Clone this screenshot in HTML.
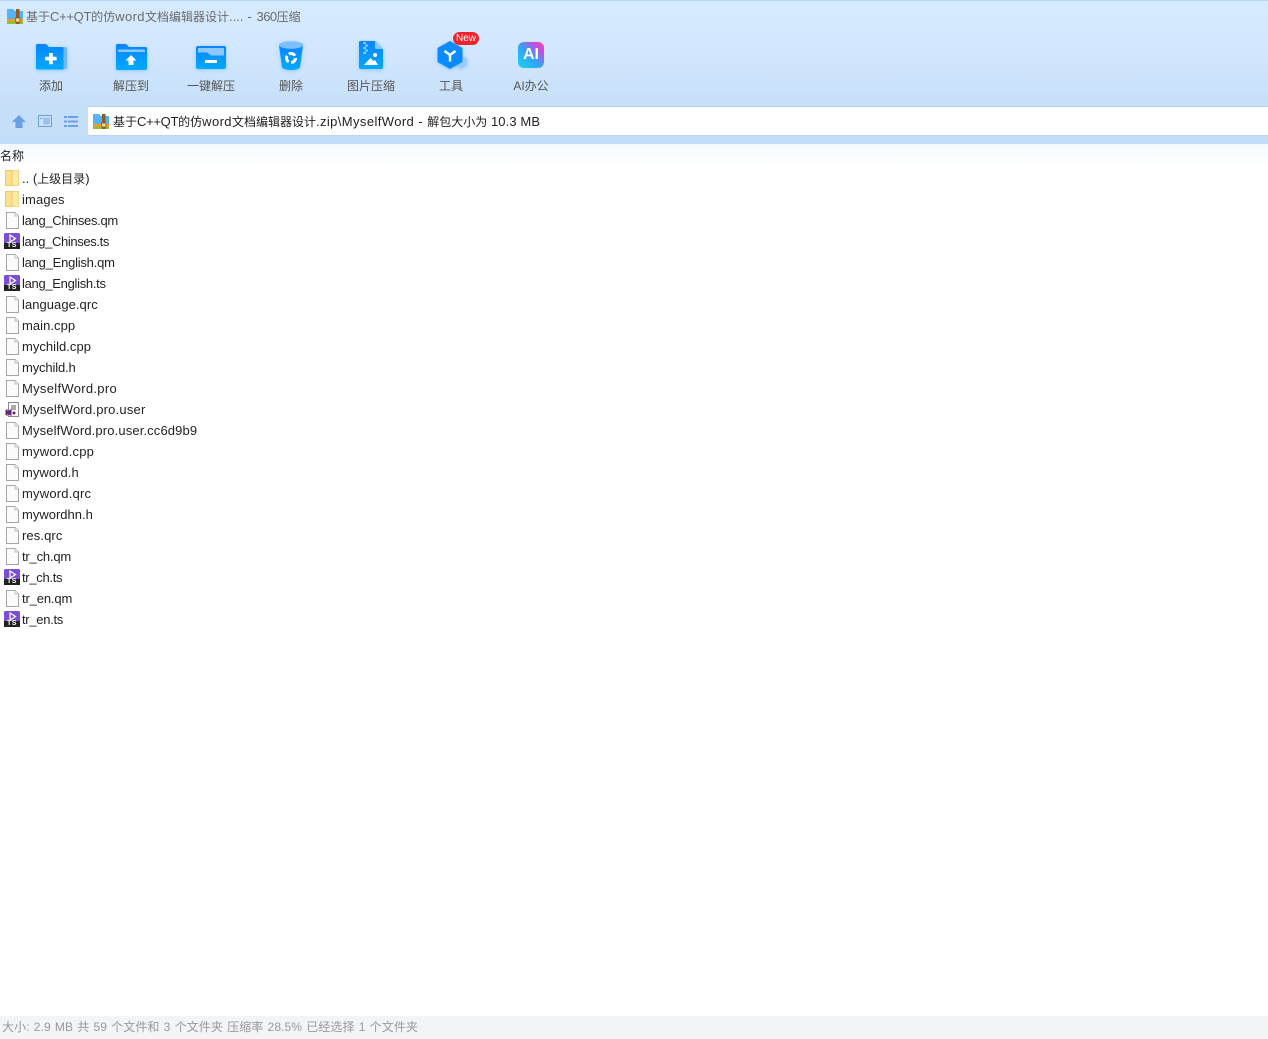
<!DOCTYPE html>
<html lang="zh-CN">
<head>
<meta charset="utf-8">
<title>360压缩</title>
<style>
html,body{margin:0;padding:0;background:#fff}
body{width:1268px;height:1039px;position:relative;overflow:hidden;font-family:"Liberation Sans","Noto Sans CJK SC",sans-serif;font-size:13px;color:#222}
.abs,.t,.l,svg{position:absolute}
.ic{filter:drop-shadow(0 1px 2px rgba(0,140,255,.3))}
#top{position:absolute;left:0;top:0;width:1268px;height:144px;background:linear-gradient(#d6ebff 0,#d2e7fe 50px,#c6dff8 106px);border-top:1px solid #b9d6f2;box-sizing:border-box}
#strip{position:absolute;left:0;top:136px;width:1268px;height:8px;background:#c2ddf9}
#fade{position:absolute;left:0;top:144px;width:1268px;height:24px;background:linear-gradient(#f3f9ff,#fff)}
#addr{position:absolute;left:88px;top:106px;width:1180px;height:28px;background:#fff;border-top:1px solid #b9d5f0;border-bottom:1px solid #b9d5f0}
.t{white-space:nowrap;line-height:18px}
.c{font-size:12px;letter-spacing:0}
.k{letter-spacing:-.3px}
.w{letter-spacing:.4px}
.d{letter-spacing:.5px}
.l{white-space:nowrap;line-height:18px;color:#555;width:80px;text-align:center;top:77px;font-size:12px}
#st{position:absolute;left:0;top:1016px;width:1268px;height:23px;background:#f3f4f8}
.ts{position:absolute;left:4px;width:16px;text-align:center;color:#fff;font-size:7px;line-height:6px;font-weight:bold;letter-spacing:.5px}
</style>
</head>
<body>
<div id="top"></div>
<div id="strip"></div>
<div id="fade"></div>
<div id="addr"></div>
<div id="st"></div>

<svg style="left:7px;top:9px" width="16" height="15" viewBox="0 0 16 15"><path d="M0 0H6L8 2H16V11H0Z" fill="#52b4f2"/><rect y="10" width="16" height="2.5" fill="#f59a23"/><rect y="12.5" width="16" height="2.5" fill="#8ac234"/><rect x="9" y="0" width="3.5" height="15" fill="#8f5a25"/><rect x="8.5" y="9" width="4.5" height="4" fill="#f7d58b" stroke="#8f5a25" stroke-width=".8"/></svg>
<div class="t" style="left:26px;top:8px;color:#6a6a6a"><span class="c">基于</span><span class="k">C++QT</span><span class="c">的仿</span><span class="w">word</span><span class="c">文档编辑器设计</span>....<span class="d"> - </span><span style="letter-spacing:-.5px">360</span><span class="c">压缩</span></div>

<svg class="ic" width="32" height="26" viewBox="0 0 32 26" style="left:35px;top:44px"><defs><linearGradient id="g" x1="0" y1="0" x2="0" y2="1"><stop offset="0" stop-color="#0a84ff"/><stop offset="1" stop-color="#00aaff"/></linearGradient></defs><path d="M27 3h3.500a1.500 1.500 0 0 1 1.500 1.500v19a1.500 1.500 0 0 1-1.500 1.500H27Z" fill="#6fb9fb"/><path d="M1 1.500C1 .7 1.700 0 2.500 0H11l3 3h13c.8 0 1.500.7 1.500 1.500V25.500H2.500C1.700 25.500 1 24.800 1 24Z" fill="url(#g)"/><path d="M14 9h3.800v3.800h3.800v3.600h-3.800v3.800H14v-3.800h-3.800v-3.600H14Z" fill="#fff"/></svg>
<div class="l" style="left:11px">添加</div>

<svg class="ic" width="31" height="26" viewBox="0 0 31 26" style="left:116px;top:44px"><path d="M0 1.500C0 .7.700 0 1.500 0H10l3 3h16.500c.8 0 1.500.7 1.500 1.500V24.500c0 .8-.7 1.500-1.500 1.500H1.500C.7 26 0 25.300 0 24.500Z" fill="url(#g)"/><path d="M2 8V6.500c0-.5.400-1 1-1H28c.6 0 1 .5 1 1V8Z" fill="#8cc8fd"/><path d="M15 11l5.500 5.500H17.500V21h-5V16.500H9.500Z" fill="#fff"/></svg>
<div class="l" style="left:91px">解压到</div>

<svg class="ic" width="30" height="23" viewBox="0 0 30 23" style="left:196px;top:46px"><rect width="30" height="23" rx="2" fill="url(#g)"/><path d="M2 2H28V9.500H15L11 6.500H2Z" fill="#8cc8fd"/><rect x="9" y="14" width="12" height="3" fill="#fff"/></svg>
<div class="l" style="left:171px">一键解压</div>

<svg class="ic" width="24" height="29" viewBox="0 0 24 29" style="left:279px;top:41px"><path d="M0 4L3 26c.2 1.600 4 3 9 3s8.800-1.400 9-3L24 4Z" fill="url(#g)"/><ellipse cx="12" cy="4" rx="12" ry="3.800" fill="#7cc0fb"/><circle cx="12" cy="17" r="4.500" fill="none" stroke="#fff" stroke-width="3" stroke-dasharray="7 2.400"/></svg>
<div class="l" style="left:251px">删除</div>

<svg class="ic" width="24" height="28" viewBox="0 0 24 28" style="left:359px;top:41px"><path d="M1 0H16L24 8V26.500c0 .8-.7 1.500-1.500 1.500H1.500C.7 28 0 27.300 0 26.500V1C0 .5.500 0 1 0Z" fill="url(#g)"/><path d="M16 0L24 8H17.500c-.8 0-1.500-.7-1.500-1.500Z" fill="#8cc8fd"/><path d="M4 1h3v2H4ZM6 3.500h3v2H6ZM4 6h3v2H4ZM6 8.500h3v2H6ZM4 11h3v2H4Z" fill="#8cc8fd"/><circle cx="16" cy="14" r="2" fill="#fff"/><path d="M5 24L11.500 17 14.500 20 16 19 19 24Z" fill="#fff"/></svg>
<div class="l" style="left:331px">图片压缩</div>

<svg class="ic" width="30" height="28" viewBox="0 0 30 28" style="left:437px;top:41px"><path d="M24 14l6 3.500v6.500l-6 3.500-6-3.500v-6.500Z" fill="#9acbfa"/><path d="M13 0l12.500 7v14L13 28 .5 21V7Z" fill="#0a8cff"/><path d="M7.500 10L13 14 18.500 10M13 14V20.500" fill="none" stroke="#fff" stroke-width="2.400"/></svg>
<div class="abs" style="left:453px;top:32px;width:26px;height:13px;background:#f5222d;border-radius:7px;color:#fff;font-size:10px;line-height:13px;text-align:center">New</div>
<div class="l" style="left:411px">工具</div>

<svg width="26" height="26" viewBox="0 0 26 26" style="left:518px;top:42px"><defs><linearGradient id="ai" x1="0" y1="1" x2="1" y2="0"><stop offset="0" stop-color="#10d8f0"/><stop offset=".5" stop-color="#3b9cf5"/><stop offset=".8" stop-color="#d048e0"/><stop offset="1" stop-color="#f04a80"/></linearGradient></defs><rect width="26" height="26" rx="6" fill="url(#ai)"/></svg>
<div class="abs" style="left:518px;top:46px;width:26px;text-align:center;color:#fff;font-weight:bold;font-size:16px;line-height:18px">AI</div>
<div class="l" style="left:491px">AI办公</div>

<svg width="14" height="13" viewBox="0 0 14 13" style="left:12px;top:115px"><path d="M7 0l7 7h-3.500v6h-7V7H0Z" fill="#6a9fe8"/></svg>
<svg width="14" height="12" viewBox="0 0 14 12" style="left:38px;top:115px"><rect x=".5" y=".5" width="13" height="11" fill="#cfe2f9" stroke="#6a9fe8"/><rect x="5" y="2.500" width="7" height="7" fill="#9cc0f0"/><rect x="2" y="3" width="2" height="1" fill="#6a9fe8"/></svg>
<svg width="14" height="11" viewBox="0 0 14 11" style="left:64px;top:116px" fill="#6a9fe8"><rect width="3" height="2"/><rect x="4" width="10" height="2"/><rect y="4.500" width="3" height="2"/><rect x="4" y="4.500" width="10" height="2"/><rect y="9" width="3" height="2"/><rect x="4" y="9" width="10" height="2"/></svg>

<svg width="16" height="15" viewBox="0 0 16 15" style="left:93px;top:114px"><path d="M0 0H6L8 2H16V11H0Z" fill="#52b4f2"/><rect y="10" width="16" height="2.500" fill="#f59a23"/><rect y="12.500" width="16" height="2.500" fill="#8ac234"/><rect x="9" y="0" width="3.500" height="15" fill="#8f5a25"/><rect x="8.500" y="9" width="4.500" height="4" fill="#f7d58b" stroke="#8f5a25" stroke-width=".8"/></svg>
<div class="t" style="left:113px;top:113px;color:#222"><span class="c">基于</span><span class="k">C++QT</span><span class="c">的仿</span><span class="w">word</span><span class="c">文档编辑器设计</span><span class="w">.zip\MyselfWord</span><span class="d"> - </span><span class="c">解包大小为</span><span style="letter-spacing:.1px"> 10.3 MB</span></div>

<div class="t" style="left:0;top:147px;font-size:12px">名称</div>

<svg width="14" height="16" viewBox="0 0 14 16" style="left:5px;top:170px"><rect x=".5" y=".5" width="13" height="15" fill="#ffe9a8" stroke="#f2d688"/><path d="M.5.500h6l.5.500v14.500H.5Z" fill="#ffe08a" stroke="#eec96a"/></svg>
<div class="t" style="left:22px;top:170px">.. (<span class="c">上级目录</span>)</div>
<svg width="14" height="16" viewBox="0 0 14 16" style="left:5px;top:191px"><rect x=".5" y=".5" width="13" height="15" fill="#ffe9a8" stroke="#f2d688"/><path d="M.5.500h6l.5.500v14.500H.5Z" fill="#ffe08a" stroke="#eec96a"/></svg>
<div class="t" style="left:22px;top:191px;letter-spacing:.13px">images</div>

<svg width="13" height="17" viewBox="0 0 13 17" style="left:6px;top:212px"><path d="M.5.500H9L12.500 4V16.500H.5Z" fill="#fbfbfb" stroke="#a5a5a5"/><path d="M9 .5V4H12.500" fill="#eee" stroke="#c0c0c0"/></svg>
<div class="t" style="left:22px;top:212px;letter-spacing:-.3px">lang_Chinses.qm</div>

<svg width="16" height="16" viewBox="0 0 16 16" style="left:4px;top:233px"><rect width="16" height="16" rx="1.500" fill="#7a4fd6"/><rect y="10" width="16" height="6" fill="#222"/><path d="M6 2l5.500 3.500L6 9Z" fill="none" stroke="#fff" stroke-width="1.200"/></svg>
<div class="ts" style="top:243px">TS</div>
<div class="t" style="left:22px;top:233px;letter-spacing:-.37px">lang_Chinses.ts</div>

<svg width="13" height="17" viewBox="0 0 13 17" style="left:6px;top:254px"><path d="M.5.500H9L12.500 4V16.500H.5Z" fill="#fbfbfb" stroke="#a5a5a5"/><path d="M9 .5V4H12.500" fill="#eee" stroke="#c0c0c0"/></svg>
<div class="t" style="left:22px;top:254px;letter-spacing:-.23px">lang_English.qm</div>

<svg width="16" height="16" viewBox="0 0 16 16" style="left:4px;top:275px"><rect width="16" height="16" rx="1.500" fill="#7a4fd6"/><rect y="10" width="16" height="6" fill="#222"/><path d="M6 2l5.500 3.500L6 9Z" fill="none" stroke="#fff" stroke-width="1.200"/></svg>
<div class="ts" style="top:285px">TS</div>
<div class="t" style="left:22px;top:275px;letter-spacing:-.3px">lang_English.ts</div>

<svg width="13" height="17" viewBox="0 0 13 17" style="left:6px;top:296px"><path d="M.5.500H9L12.500 4V16.500H.5Z" fill="#fbfbfb" stroke="#a5a5a5"/><path d="M9 .5V4H12.500" fill="#eee" stroke="#c0c0c0"/></svg>
<div class="t" style="left:22px;top:296px;letter-spacing:.05px">language.qrc</div>

<svg width="13" height="17" viewBox="0 0 13 17" style="left:6px;top:317px"><path d="M.5.500H9L12.500 4V16.500H.5Z" fill="#fbfbfb" stroke="#a5a5a5"/><path d="M9 .5V4H12.500" fill="#eee" stroke="#c0c0c0"/></svg>
<div class="t" style="left:22px;top:317px;letter-spacing:.05px">main.cpp</div>

<svg width="13" height="17" viewBox="0 0 13 17" style="left:6px;top:338px"><path d="M.5.500H9L12.500 4V16.500H.5Z" fill="#fbfbfb" stroke="#a5a5a5"/><path d="M9 .5V4H12.500" fill="#eee" stroke="#c0c0c0"/></svg>
<div class="t" style="left:22px;top:338px;letter-spacing:.03px">mychild.cpp</div>

<svg width="13" height="17" viewBox="0 0 13 17" style="left:6px;top:359px"><path d="M.5.500H9L12.500 4V16.500H.5Z" fill="#fbfbfb" stroke="#a5a5a5"/><path d="M9 .5V4H12.500" fill="#eee" stroke="#c0c0c0"/></svg>
<div class="t" style="left:22px;top:359px;letter-spacing:-.14px">mychild.h</div>

<svg width="13" height="17" viewBox="0 0 13 17" style="left:6px;top:380px"><path d="M.5.500H9L12.500 4V16.500H.5Z" fill="#fbfbfb" stroke="#a5a5a5"/><path d="M9 .5V4H12.500" fill="#eee" stroke="#c0c0c0"/></svg>
<div class="t" style="left:22px;top:380px;letter-spacing:.3px">MyselfWord.pro</div>

<svg width="14" height="15" viewBox="0 0 14 15" style="left:5px;top:402px"><path d="M3.500.500H13.500V14.500H3.500Z" fill="#fff" stroke="#888"/><path d="M6 3h5v5H6Z" fill="#aaa"/><path d="M.5 8l2-1v7l-2-1ZM2.500 9l4-2v7l-4-2Z" fill="#68217a"/><circle cx="9" cy="11" r="1.500" fill="#68217a"/></svg>
<div class="t" style="left:22px;top:401px;letter-spacing:.2px">MyselfWord.pro.user</div>

<svg width="13" height="17" viewBox="0 0 13 17" style="left:6px;top:422px"><path d="M.5.500H9L12.500 4V16.500H.5Z" fill="#fbfbfb" stroke="#a5a5a5"/><path d="M9 .5V4H12.500" fill="#eee" stroke="#c0c0c0"/></svg>
<div class="t" style="left:22px;top:422px;letter-spacing:.13px">MyselfWord.pro.user.cc6d9b9</div>

<svg width="13" height="17" viewBox="0 0 13 17" style="left:6px;top:443px"><path d="M.5.500H9L12.500 4V16.500H.5Z" fill="#fbfbfb" stroke="#a5a5a5"/><path d="M9 .5V4H12.500" fill="#eee" stroke="#c0c0c0"/></svg>
<div class="t" style="left:22px;top:443px;letter-spacing:.2px">myword.cpp</div>

<svg width="13" height="17" viewBox="0 0 13 17" style="left:6px;top:464px"><path d="M.5.500H9L12.500 4V16.500H.5Z" fill="#fbfbfb" stroke="#a5a5a5"/><path d="M9 .5V4H12.500" fill="#eee" stroke="#c0c0c0"/></svg>
<div class="t" style="left:22px;top:464px;letter-spacing:.05px">myword.h</div>

<svg width="13" height="17" viewBox="0 0 13 17" style="left:6px;top:485px"><path d="M.5.500H9L12.500 4V16.500H.5Z" fill="#fbfbfb" stroke="#a5a5a5"/><path d="M9 .5V4H12.500" fill="#eee" stroke="#c0c0c0"/></svg>
<div class="t" style="left:22px;top:485px;letter-spacing:.2px">myword.qrc</div>

<svg width="13" height="17" viewBox="0 0 13 17" style="left:6px;top:506px"><path d="M.5.500H9L12.500 4V16.500H.5Z" fill="#fbfbfb" stroke="#a5a5a5"/><path d="M9 .5V4H12.500" fill="#eee" stroke="#c0c0c0"/></svg>
<div class="t" style="left:22px;top:506px">mywordhn.h</div>

<svg width="13" height="17" viewBox="0 0 13 17" style="left:6px;top:527px"><path d="M.5.500H9L12.500 4V16.500H.5Z" fill="#fbfbfb" stroke="#a5a5a5"/><path d="M9 .5V4H12.500" fill="#eee" stroke="#c0c0c0"/></svg>
<div class="t" style="left:22px;top:527px;letter-spacing:.1px">res.qrc</div>

<svg width="13" height="17" viewBox="0 0 13 17" style="left:6px;top:548px"><path d="M.5.500H9L12.500 4V16.500H.5Z" fill="#fbfbfb" stroke="#a5a5a5"/><path d="M9 .5V4H12.500" fill="#eee" stroke="#c0c0c0"/></svg>
<div class="t" style="left:22px;top:548px;letter-spacing:-.2px">tr_ch.qm</div>

<svg width="16" height="16" viewBox="0 0 16 16" style="left:4px;top:569px"><rect width="16" height="16" rx="1.500" fill="#7a4fd6"/><rect y="10" width="16" height="6" fill="#222"/><path d="M6 2l5.500 3.500L6 9Z" fill="none" stroke="#fff" stroke-width="1.200"/></svg>
<div class="ts" style="top:579px">TS</div>
<div class="t" style="left:22px;top:569px;letter-spacing:-.3px">tr_ch.ts</div>

<svg width="13" height="17" viewBox="0 0 13 17" style="left:6px;top:590px"><path d="M.5.500H9L12.500 4V16.500H.5Z" fill="#fbfbfb" stroke="#a5a5a5"/><path d="M9 .5V4H12.500" fill="#eee" stroke="#c0c0c0"/></svg>
<div class="t" style="left:22px;top:590px;letter-spacing:-.14px">tr_en.qm</div>

<svg width="16" height="16" viewBox="0 0 16 16" style="left:4px;top:611px"><rect width="16" height="16" rx="1.500" fill="#7a4fd6"/><rect y="10" width="16" height="6" fill="#222"/><path d="M6 2l5.500 3.500L6 9Z" fill="none" stroke="#fff" stroke-width="1.200"/></svg>
<div class="ts" style="top:621px">TS</div>
<div class="t" style="left:22px;top:611px;letter-spacing:-.3px">tr_en.ts</div>

<div class="t" style="left:2px;top:1018px;color:#999;font-size:12px;letter-spacing:.1px;word-spacing:.7px">大小: 2.9 MB 共 59 个文件和 3 个文件夹 压缩率 28.5% 已经选择 1 个文件夹</div>
</body>
</html>
